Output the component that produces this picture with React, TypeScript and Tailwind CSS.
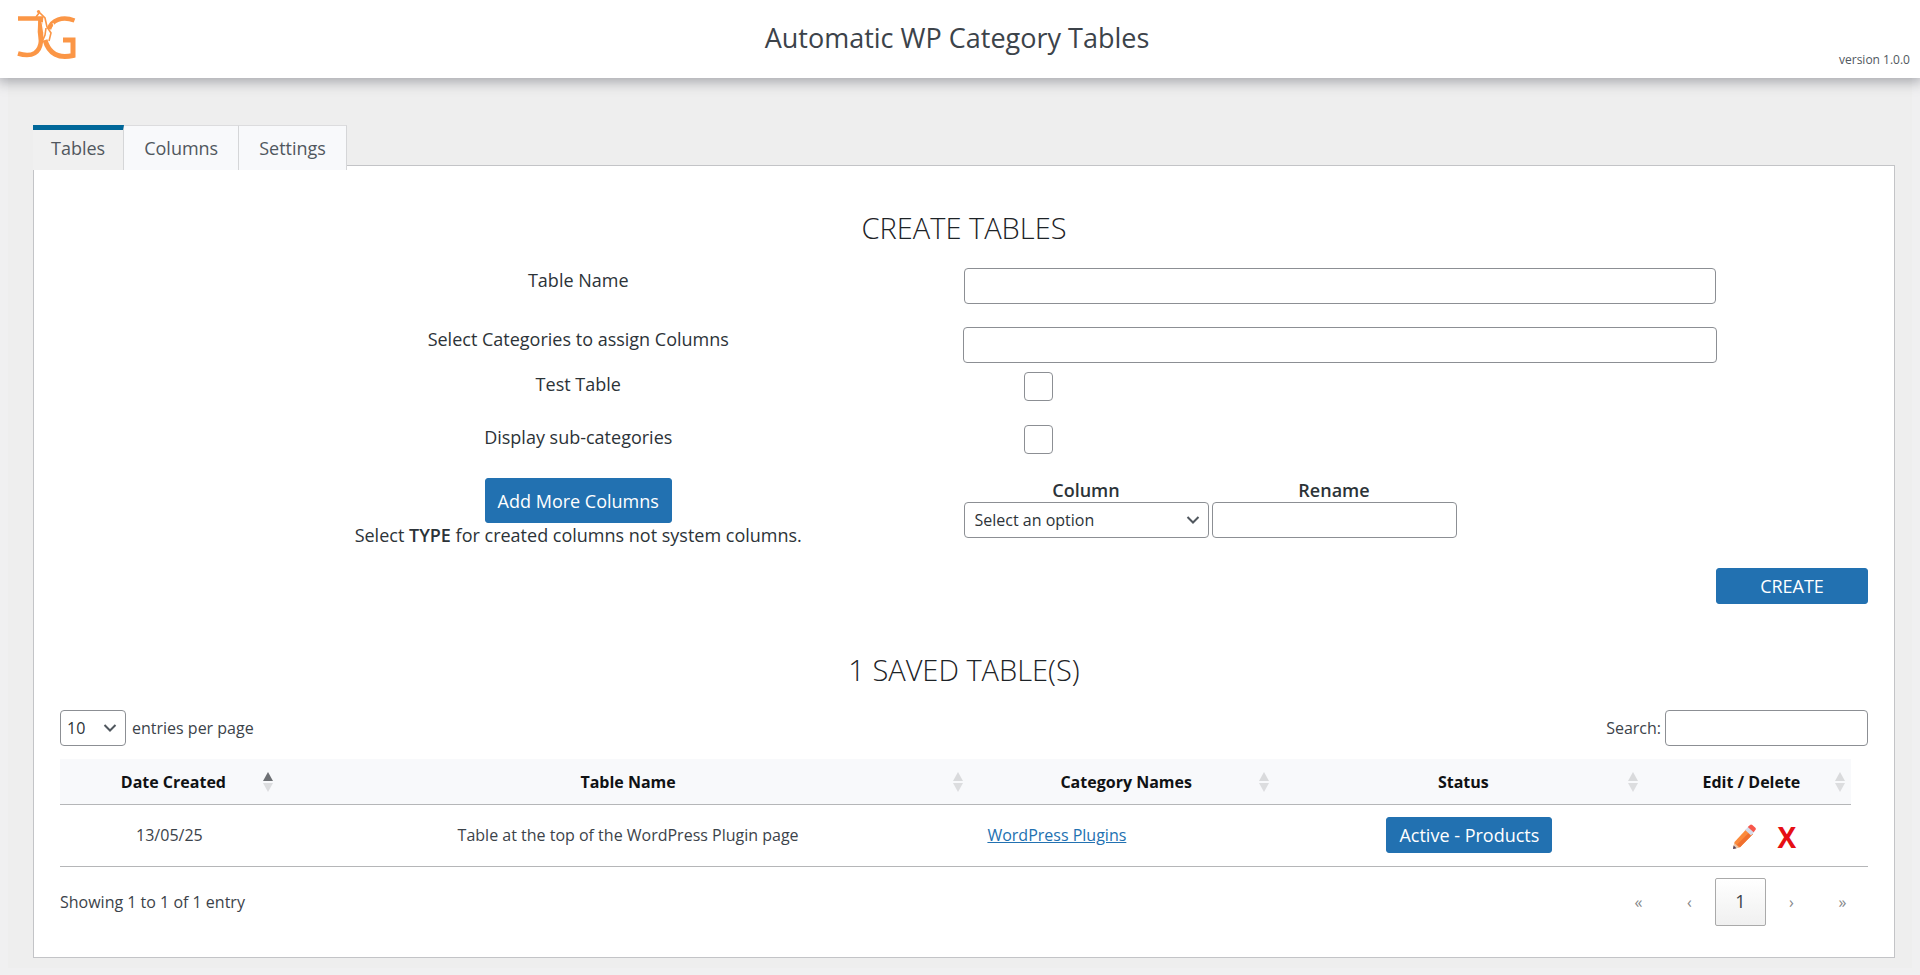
import { useState } from "react";
import type { ReactNode } from "react";

const field = "h-9 rounded border border-[#8c8f94] bg-white text-[#2c3338]";
const primary = "rounded-[3px] border border-[#2271b1] bg-[#2271b1] text-white";

function Logo() {
  return (
    <svg viewBox="0 0 60 52" className="h-[52px] w-[60px]" fill="none" stroke="#fb9646" role="img" aria-label="JG">
      <path d="M2 10.5H25C24 17 25.5 24 25 33C24 44 17 50 2 45.5" strokeWidth="4.5" />
      <path d="M58.5 12.5C46 8 36 12 33 21" strokeWidth="4.5" />
      <path d="M47 32H57V47.5C43 51 33 46 29 32" strokeWidth="5" />
      <path d="M23 4L29 10L31 19L35 25L33 33M23 5L20 9M23 12L22.5 24L24 36M30 20L29 27L26 34" strokeWidth="1.6" />
      <circle cx="22.5" cy="3.5" r="1.6" fill="#fb9646" stroke="none" />
      <path d="M26 14L27.5 24M37 15L38 19" stroke="#fff" strokeWidth="1" />
    </svg>
  );
}

function Chevron() {
  return (
    <svg viewBox="0 0 14 9" className="pointer-events-none absolute top-1/2 right-[9px] h-[9px] w-[14px] -translate-y-1/2" fill="none" stroke="#50575e" strokeWidth="2">
      <path d="M1.5 1.5L7 7L12.5 1.5" />
    </svg>
  );
}

function SortArrows({ active }: { active?: boolean }) {
  return (
    <svg viewBox="0 0 10 20" className="h-5 w-[10px] shrink-0" aria-hidden="true">
      <path d="M5 0L10 9H0Z" fill={active ? "#6d7074" : "#d9dadc"} />
      <path d="M0 11H10L5 20Z" fill="#dcdddf" />
    </svg>
  );
}

function Pencil() {
  return (
    <svg viewBox="0 0 24 26" className="h-[26px] w-6" aria-hidden="true">
      <path d="M1 25L2.5 18L14.5 5L20.8 10.2L8 23.2Z" fill="#fb8a3c" />
      <path d="M5 20.8L18 7.5L20.8 10.2L8 23.2Z" fill="#f0702f" />
      <path d="M1 25L2.3 19L7 23.5Z" fill="#e9c7ae" />
      <path d="M1 25L1.7 21.6L4.4 24.2Z" fill="#4a4260" />
      <path d="M13.2 6L16.5 2.4L22.5 7.8L19 11.4Z" fill="#d5dbea" />
      <path d="M15.8 3L18 1Q19 0 20.3 1L23.4 3.8Q24.3 5 23.4 6L21.6 8.2Z" fill="#f8574b" />
    </svg>
  );
}

function HeadCell({ children, width, sorted, last }: { children: ReactNode; width: string; sorted?: boolean; last?: boolean }) {
  return (
    <th scope="col" aria-sort={sorted ? "ascending" : undefined} className={`${width} p-0 ${last ? "pr-[17px]" : ""}`}>
      <div className="flex h-[46px] items-center border-b border-[#b5b6b8] bg-[#f8f9fb] pr-[6px] pl-6">
        <span className="flex-1 text-center">{children}</span>
        <SortArrows active={sorted} />
      </div>
    </th>
  );
}

function PageButton({ children, label }: { children: ReactNode; label: string }) {
  return (
    <button type="button" disabled aria-label={label} className="h-12 w-[51px] text-[#85878a]">
      {children}
    </button>
  );
}

export default function App() {
  const tabs = ["Tables", "Columns", "Settings"];
  const [tab, setTab] = useState("Tables");
  return (
    <div className="flex min-h-screen flex-col bg-[#f0f0f1] font-['Open_Sans','Noto_Sans',sans-serif] text-[#3c434a]">
      <header className="relative z-10 grid h-[78px] grid-cols-3 bg-white pr-[10px] pl-1 shadow-[0_2px_12px_2px_rgba(60,62,75,0.4)]">
        <div className="pt-2 pl-3">
          <Logo />
        </div>
        <h1 className="pt-5 text-center text-[27px] leading-9 whitespace-nowrap">Automatic WP Category Tables</h1>
        <div className="self-end pb-2 text-right text-xs leading-5 text-[#50575e]">version 1.0.0</div>
      </header>

      <main className="mx-2 mb-[7px] flex-1 bg-[#eeeeee] pt-[47px] pr-[17px] pb-[10px] pl-[25px]">
        <div role="tablist" className="relative z-10 -mb-[5px] flex">
          {tabs.map((name) => (
            <button
              key={name}
              type="button"
              role="tab"
              aria-selected={tab === name}
              onClick={() => setTab(name)}
              className={`h-[45px] border-r border-[#d5d6d8] text-[18px] text-[#50575e] ${
                tab === name ? "border-t-[5px] border-t-[#006799] bg-[#f0f0f0] px-[18px] pb-1" : "border-t border-t-[#dcdcde] bg-[#f8f9fb] px-5"
              }`}
            >
              {name}
            </button>
          ))}
        </div>

        <section className="border border-[#c3c4c7] bg-white px-[26px] pt-[42px] pb-[31px]">
          <h2 className="text-center text-[29px] leading-10 font-light text-[#1d2327]">CREATE TABLES</h2>

          <form onSubmit={(e) => e.preventDefault()}>
            <div className="grid grid-cols-[768fr_754fr] pt-[20px] pr-[151px] pl-[134px] text-[18px] leading-6 text-[#2c3338]">
              <label htmlFor="table-name" className="h-[59px] text-center">Table Name</label>
              <input id="table-name" type="text" className={`${field} mx-px px-3`} />
              <label htmlFor="categories" className="h-[45px] text-center">Select Categories to assign Columns</label>
              <input id="categories" type="text" className={`${field} px-3`} />
              <label htmlFor="test-table" className="h-[53px] text-center">Test Table</label>
              <input id="test-table" type="checkbox" className="ml-[61px] size-[29px] appearance-none rounded border border-[#8c8f94] bg-white checked:bg-[#2271b1]" />
              <label htmlFor="sub-categories" className="h-[53px] text-center">Display sub-categories</label>
              <input id="sub-categories" type="checkbox" className="ml-[61px] size-[29px] appearance-none rounded border border-[#8c8f94] bg-white checked:bg-[#2271b1]" />
              <div className="flex flex-col items-center">
                <button type="button" className={`${primary} h-[45px] px-3 text-[18px]`}>Add More Columns</button>
                <p>
                  Select <b className="font-semibold">TYPE</b> for created columns not system columns.
                </p>
              </div>
              <div className="flex gap-[3px] px-px text-center font-semibold">
                <div>
                  <label htmlFor="column" className="block">Column</label>
                  <div className="relative">
                    <select id="column" className={`${field} w-[245px] appearance-none px-[10px] text-base font-normal`}>
                      <option>Select an option</option>
                    </select>
                    <Chevron />
                  </div>
                </div>
                <div>
                  <label htmlFor="rename" className="block">Rename</label>
                  <input id="rename" type="text" className={`${field} w-[245px] px-3`} />
                </div>
              </div>
            </div>
            <div className="mt-[21px] flex justify-end">
              <button type="submit" className={`${primary} h-9 w-[152px] text-[18px]`}>CREATE</button>
            </div>
          </form>

          <h2 className="mt-[46px] text-center text-[29px] leading-10 font-light text-[#1d2327]">1 SAVED TABLE(S)</h2>

          <div className="mt-5 flex items-center justify-between text-base">
            <div className="flex items-center gap-[6px]">
              <div className="relative">
                <select id="page-size" className={`${field} w-[66px] appearance-none px-[6px]`}>
                  <option>10</option>
                  <option>25</option>
                </select>
                <Chevron />
              </div>
              <label htmlFor="page-size">entries per page</label>
            </div>
            <div className="flex items-center gap-1">
              <label htmlFor="search">Search:</label>
              <input id="search" type="search" className={`${field} w-[203px] px-2`} />
            </div>
          </div>

          <table className="mt-[13px] w-full table-fixed border-collapse text-base">
            <thead className="font-bold text-[#101214]">
              <tr>
                <HeadCell width="w-[12.1%]" sorted>Date Created</HeadCell>
                <HeadCell width="w-[38.2%]">Table Name</HeadCell>
                <HeadCell width="w-[16.9%]">Category Names</HeadCell>
                <HeadCell width="w-[20.4%]">Status</HeadCell>
                <HeadCell width="w-[12.4%]" last>Edit / Delete</HeadCell>
              </tr>
            </thead>
            <tbody>
              <tr className="h-[61px] border-b border-[#b5b6b8] text-center">
                <td>13/05/25</td>
                <td className="pl-2">Table at the top of the WordPress Plugin page</td>
                <td className="pl-[18px] text-left">
                  <a href="#wordpress-plugins" className="text-[#2271b1] underline">WordPress Plugins</a>
                </td>
                <td className="pl-5">
                  <button type="button" className={`${primary} h-9 px-3 text-[18px]`}>Active - Products</button>
                </td>
                <td>
                  <div className="flex items-center justify-center gap-[22px] pt-1 pl-4">
                    <button type="button" aria-label="Edit table"><Pencil /></button>
                    <button type="button" aria-label="Delete table" className="text-[28px] leading-8 font-bold text-[#e60f14]">X</button>
                  </div>
                </td>
              </tr>
            </tbody>
          </table>

          <div className="mt-[11px] flex items-center justify-between text-base">
            <div>Showing 1 to 1 of 1 entry</div>
            <nav aria-label="Pagination" className="flex">
              <PageButton label="First">«</PageButton>
              <PageButton label="Previous">‹</PageButton>
              <button type="button" aria-current="page" className="h-12 w-[51px] rounded-[2px] border border-[#aaaaaa] bg-linear-to-b from-white to-[#f0f0f0] text-[18px]">1</button>
              <PageButton label="Next">›</PageButton>
              <PageButton label="Last">»</PageButton>
            </nav>
          </div>
        </section>
      </main>
    </div>
  );
}
